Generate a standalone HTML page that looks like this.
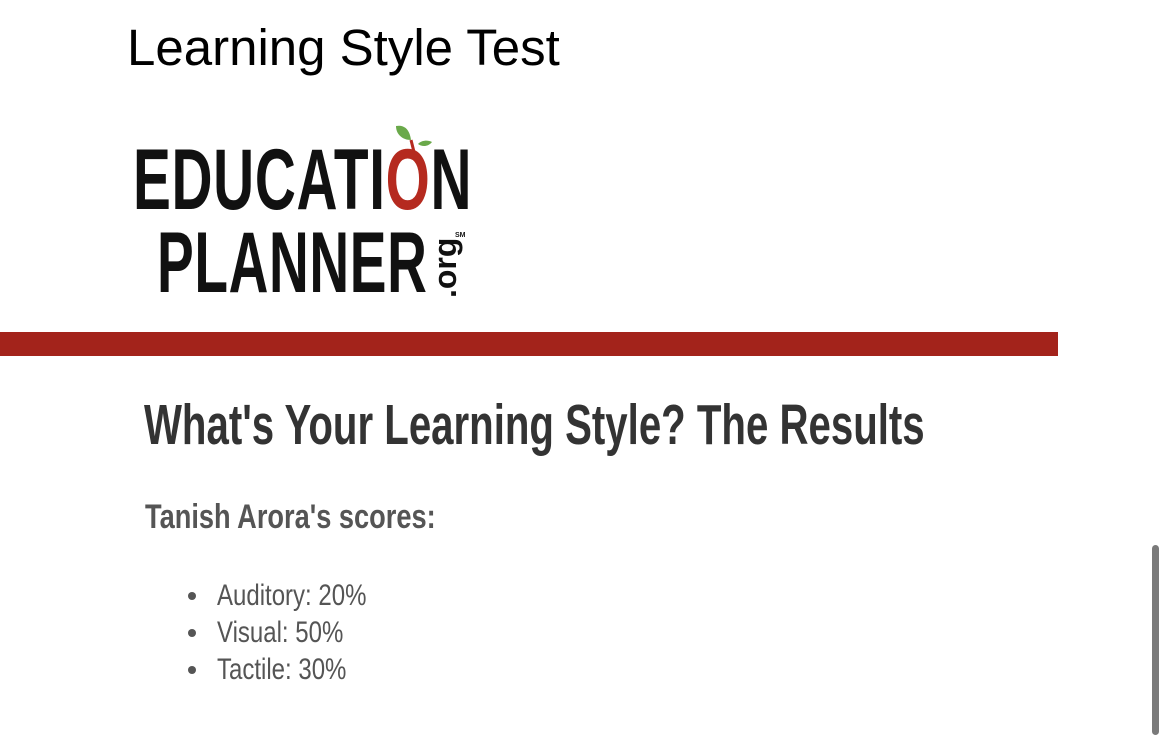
<!DOCTYPE html>
<html><head><style>
body{margin:0;width:1170px;height:722px;background:#fff;position:relative;overflow:hidden;font-family:"Liberation Sans",sans-serif}
.a{position:absolute;white-space:nowrap;transform-origin:left top}
</style></head><body>
<div class="a" style="left:127px;top:18px;font-size:51px;color:#000">Learning Style Test</div>
<div class="a" style="left:133px;top:137px;font-size:86px;font-weight:bold;color:#111;line-height:86px;transform:scaleX(0.66);letter-spacing:1px">EDUCATI<span style="color:#b52a1f">O</span>N</div>
<div class="a" style="left:157px;top:220px;font-size:86px;font-weight:bold;color:#111;line-height:86px;transform:scaleX(0.64);letter-spacing:1px">PLANNER</div>
<div class="a" style="left:434px;top:298px;font-size:32px;line-height:22px;font-weight:bold;color:#111;transform:rotate(-90deg)">.org</div>
<div class="a" style="left:455px;top:232px;font-size:7px;font-weight:bold;color:#111">SM</div>
<svg class="a" style="left:392px;top:120px" width="45" height="40"><path d="M4 6 C14 4 18 12 19 20 C10 20 4 14 4 6Z" fill="#6aa94a"/><path d="M26 24 C30 20 36 20 40 22 C36 27 30 27 26 24Z" fill="#6aa94a"/><path d="M19 20 L22 32" stroke="#b52a1f" stroke-width="3"/></svg>
<div class="a" style="left:0;top:332px;width:1058px;height:24px;background:#a3231b"></div>
<div class="a" style="left:144px;top:392px;font-size:57px;font-weight:bold;color:#333;transform:scaleX(0.705)">What's Your Learning Style? The Results</div>
<div class="a" style="left:145px;top:498px;font-size:34px;font-weight:bold;color:#555;transform:scaleX(0.80)">Tanish Arora's scores:</div>
<div class="a" style="left:217px;top:577px;font-size:30px;color:#555;line-height:37px;transform:scaleX(0.80)">
<div>Auditory: 20%</div><div>Visual: 50%</div><div>Tactile: 30%</div></div>
<div class="a" style="left:188px;top:592px;width:8px;height:8px;border-radius:50%;background:#555"></div>
<div class="a" style="left:188px;top:629px;width:8px;height:8px;border-radius:50%;background:#555"></div>
<div class="a" style="left:188px;top:666px;width:8px;height:8px;border-radius:50%;background:#555"></div>
<div class="a" style="left:1152px;top:545px;width:7px;height:190px;border-radius:4px;background:#7a7a7a"></div>
</body></html>
